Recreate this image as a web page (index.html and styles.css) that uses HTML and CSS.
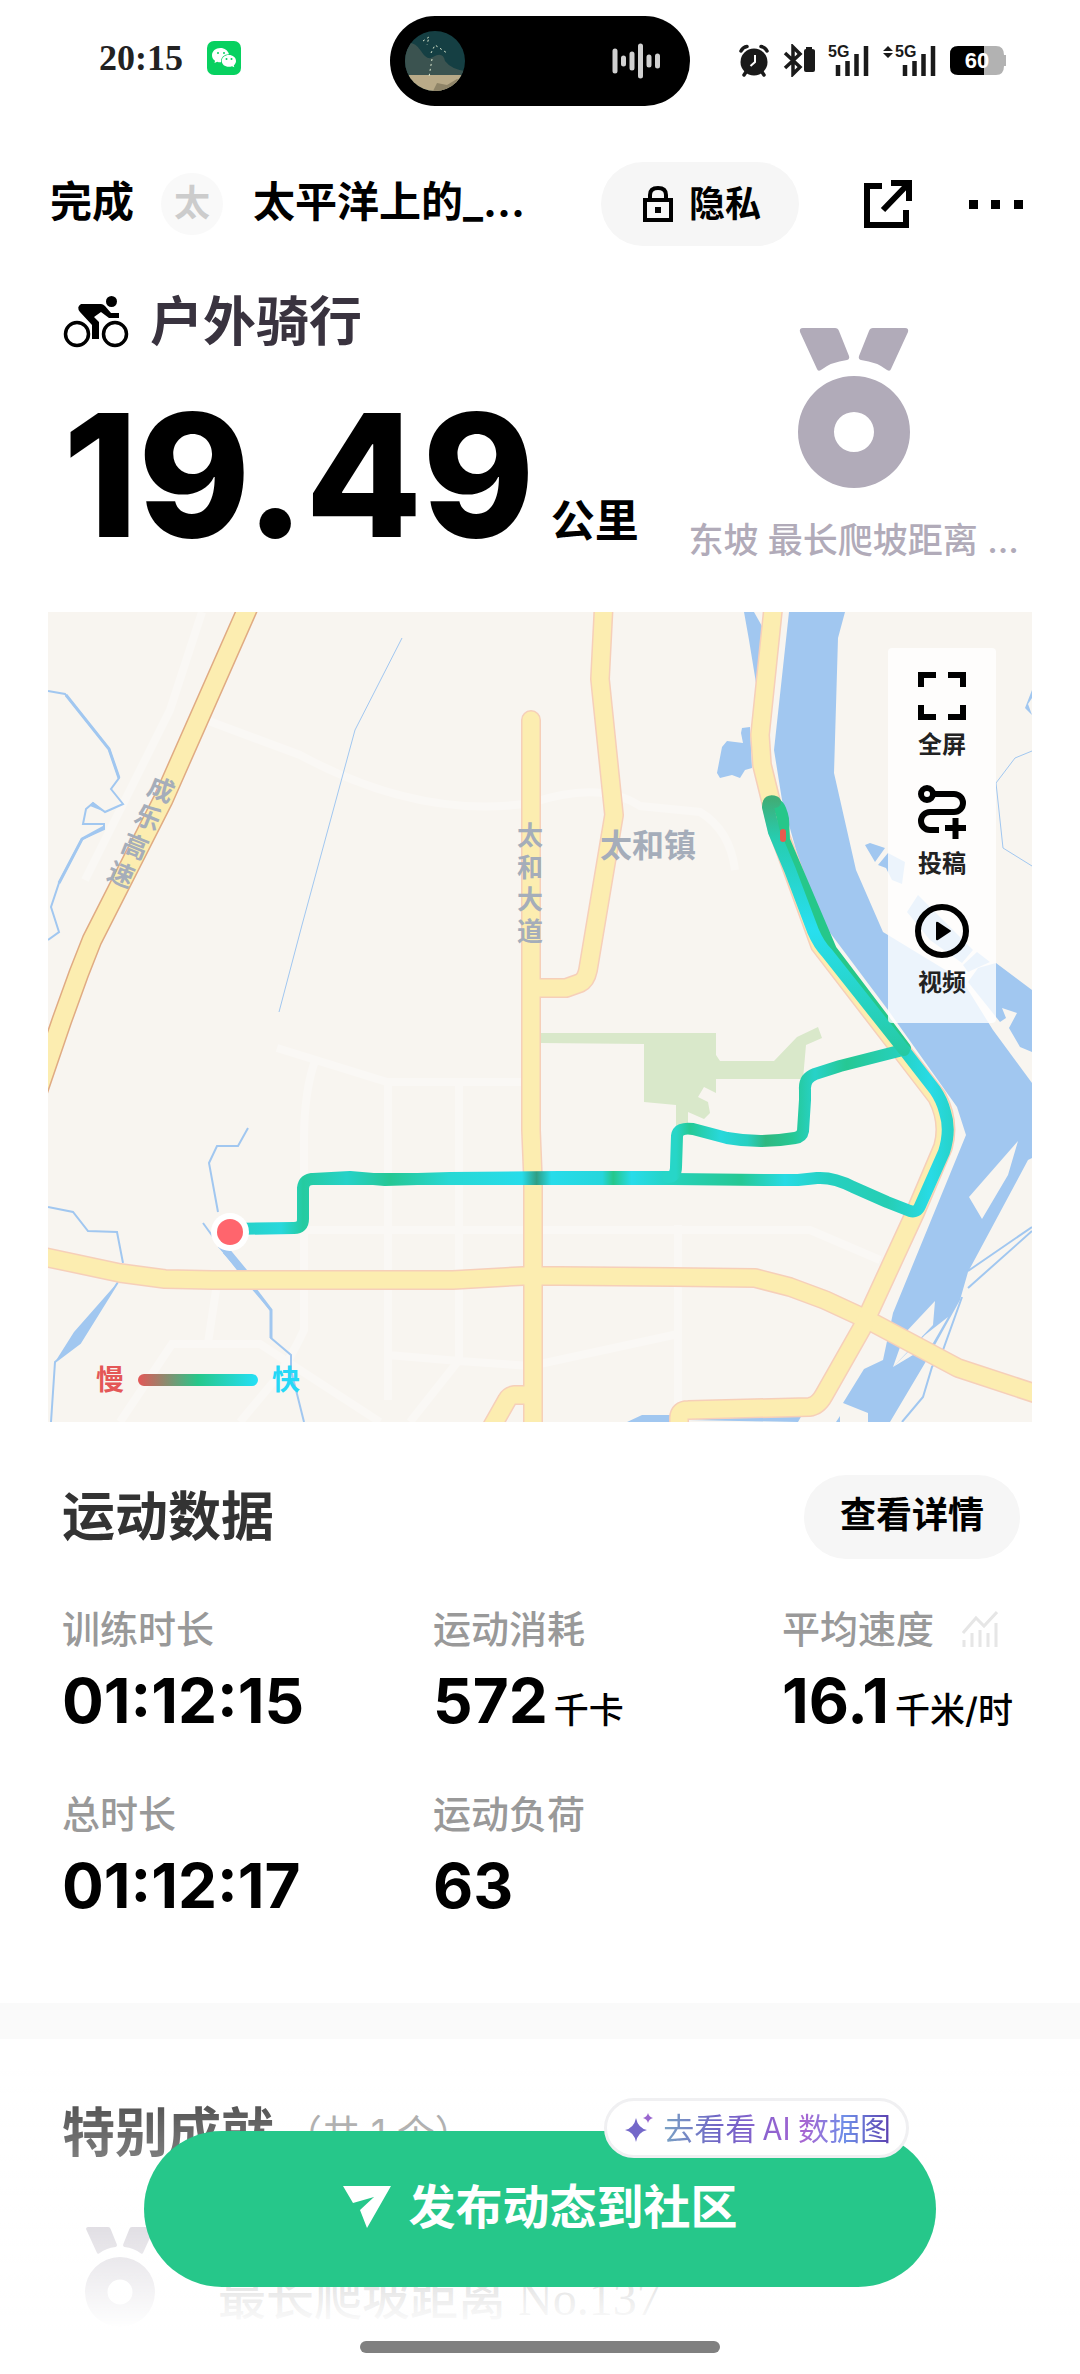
FILE: index.html
```html
<!DOCTYPE html>
<html lang="zh-CN">
<head>
    <meta charset="UTF-8">
    <meta name="viewport" content="width=device-width, initial-scale=1.0">
    <title>户外骑行</title>
    <link rel="stylesheet" href="styles.css">
</head>
<body>
    <svg width="0" height="0" class="defs" aria-hidden="true">
        <symbol id="medal" viewBox="0 0 112 160">
            <path d="M5 0H37Q40 0 41 3L51 28Q52 31 49 32Q33 34 23 42Q20 44 19 41L2 4Q1 0 5 0ZM107 0H75Q72 0 71 3L61 28Q60 31 63 32Q79 34 89 42Q92 44 93 41L110 4Q111 0 107 0Z"/>
            <path fill-rule="evenodd" d="M56 48A56 56 0 1 1 56 160A56 56 0 1 1 56 48ZM56 84A20 20 0 1 0 56 124A20 20 0 1 0 56 84Z"/>
        </symbol>
    </svg>

    <!-- Status bar -->
    <div class="status-bar">
        <div class="status-left">
            <span class="clock">20:15</span>
            <svg width="34" height="34" viewBox="0 0 34 34">
                <rect width="34" height="34" rx="7" fill="#07d160"/>
                <path fill="#fff" d="M13.500 7C8.500 7 5 10.200 5 14.200C5 16.500 6.200 18.400 8 19.700L7.500 22L10.200 20.700Q12 21.400 14 21.200A8 7 0 0 1 22 13.200C21 9.500 17.500 7 13.500 7Z"/>
                <path fill="#fff" d="M21.800 14C17.800 14 14.800 16.600 14.800 19.900S17.800 25.700 21.800 25.700Q23.500 25.700 25 25.200L27.300 26.300L26.800 24.200C28.200 23.100 29 21.600 29 19.900C29 16.600 25.800 14 21.800 14Z"/>
                <g fill="#07d160"><circle cx="11" cy="12" r="1"/><circle cx="17" cy="12" r="1"/><circle cx="19.500" cy="18" r="1"/><circle cx="24.500" cy="18" r="1"/></g>
            </svg>
        </div>
        <div class="island">
            <svg width="60" height="60" viewBox="0 0 60 60">
                <clipPath id="coverClip"><circle cx="30" cy="30" r="30"/></clipPath>
                <g clip-path="url(#coverClip)">
                    <rect width="60" height="60" fill="#153f43"/>
                    <path fill="#3b5350" d="M0 12Q10 10 16 20Q22 30 28 26Q38 20 40 30Q46 38 60 40V46H0Z"/>
                    <rect y="44" width="60" height="16" fill="#b9aa88"/>
                    <path fill="#8f8468" d="M28 60L32 52L42 54L52 48L60 52V60Z"/>
                    <path fill="none" stroke="#dce8cf" stroke-dasharray="2 3" d="M18 10L24 6L22 14M26 22L30 14L42 22M27 28L24 46"/>
                </g>
            </svg>
            <svg width="50" height="36" viewBox="0 0 50 36">
                <path stroke="#d0d0d0" stroke-width="5" stroke-linecap="round" d="M4 8V28M12.500 15V21M21 11V25M29.500 3V33M38 14V22M46.500 13V23"/>
            </svg>
        </div>
        <div class="status-right">
            <svg width="32" height="33" viewBox="0 0 32 33">
                <g stroke="#1a1a1a" stroke-width="3.500" fill="none" stroke-linecap="round">
                    <path d="M3 7Q5 3 9 2.500M29 7Q27 3 23 2.500M8 28L6 31M24 28L26 31"/>
                </g>
                <circle cx="16" cy="18" r="13.500" fill="#1a1a1a"/>
                <path d="M17 11V18L12.500 22" stroke="#fff" stroke-width="2" fill="none"/>
            </svg>
            <svg width="32" height="33" viewBox="0 0 32 33">
                <path d="M2 9L17 23L10 30V3L17 10L2 24" fill="none" stroke="#1a1a1a" stroke-width="3.500"/>
                <path d="M21 7Q21 5 23 5V3H29V5Q32 5 32 7V26Q32 28 30 28H23Q21 28 21 26Z" fill="#1a1a1a"/>
            </svg>
            <svg width="42" height="33" viewBox="0 0 42 33">
                <text x="0" y="13" class="net">5G</text>
                <path d="M10 21V32M19.500 17V32M28.500 10V32M38 2V32" stroke="#1a1a1a" stroke-width="4.500"/>
            </svg>
            <svg width="54" height="33" viewBox="0 0 54 33">
                <path d="M0 7L5 2L10 7ZM0 9H10L5 14Z" fill="#1a1a1a"/>
                <text x="12" y="13" class="net">5G</text>
                <path d="M22 21V32M31.500 17V32M40.500 10V32M50 2V32" stroke="#1a1a1a" stroke-width="4.500"/>
            </svg>
            <svg width="56" height="29" viewBox="0 0 56 29">
                <path d="M34 0H46Q54 0 54 9H56V20H54Q54 29 46 29H34Z" fill="#b2b2b2"/>
                <path d="M8 0H34V29H8Q0 29 0 21V8Q0 0 8 0Z" fill="#000"/>
                <text x="27" y="22" text-anchor="middle" class="battery-text">60</text>
            </svg>
        </div>
    </div>

    <!-- Top navigation -->
    <header class="nav">
        <button class="done">完成</button>
        <span class="avatar">太</span>
        <span class="user-name">太平洋上的_...</span>
        <button class="pill privacy">
            <svg width="30" height="36" viewBox="0 0 30 36">
                <path d="M2 14H28V34H2ZM7 14V9Q7 2 15 2T23 9V14" fill="none" stroke="#000" stroke-width="4"/>
                <rect x="12" y="21" width="6" height="6"/>
            </svg>
            隐私
        </button>
        <button class="icon-btn" aria-label="分享">
            <svg width="48" height="48" viewBox="0 0 48 48">
                <path d="M18 6H3V45H42V30M27 3H45V21M45 3L19 30" fill="none" stroke="#000" stroke-width="6"/>
            </svg>
        </button>
        <button class="icon-btn more" aria-label="更多">
            <svg width="54" height="9" viewBox="0 0 54 9">
                <path d="M0 0H9V9H0ZM22 0H31V9H22ZM45 0H54V9H45Z"/>
            </svg>
        </button>
    </header>

    <!-- Summary -->
    <section class="summary">
        <div>
            <h1 class="sport">
                <svg width="66" height="52" viewBox="0 0 66 52">
                    <g fill="none" stroke="#000" stroke-width="3.500"><circle cx="14" cy="38" r="11.500"/><circle cx="52" cy="38" r="11.500"/></g>
                    <circle cx="48.500" cy="5.500" r="5.500"/>
                    <path d="M18 8H38Q40 8 42 10L48 17H56V22H46L38 16L31 21L36 26V43H29V29L17 16Q13 11 18 8Z"/>
                </svg>
                户外骑行
            </h1>
            <p class="distance">19.49<span>公里</span></p>
        </div>
        <div class="award">
            <svg class="medal" width="112" height="160"><use href="#medal"/></svg>
            <p>东坡 最长爬坡距离 ...</p>
        </div>
    </section>

    <!-- Route map -->
    <section class="map">
        <svg class="map-canvas" viewBox="48 612 984 810">
            <defs>
                <linearGradient id="speed" gradientUnits="userSpaceOnUse" x1="230" y1="0" x2="960" y2="0">
                    <stop offset="0" stop-color="#25cfc0"/><stop offset=".07" stop-color="#28d8dc"/>
                    <stop offset=".1" stop-color="#25cba0"/><stop offset=".16" stop-color="#26d2c8"/>
                    <stop offset=".22" stop-color="#26c794"/><stop offset=".3" stop-color="#28d8d4"/>
                    <stop offset=".4" stop-color="#27dcea"/><stop offset=".42" stop-color="#2f9f84"/>
                    <stop offset=".44" stop-color="#27dcea"/><stop offset=".51" stop-color="#26d6dc"/>
                    <stop offset=".525" stop-color="#26c78a"/><stop offset=".55" stop-color="#27dcea"/>
                    <stop offset=".62" stop-color="#26d0b4"/><stop offset=".7" stop-color="#26c894"/>
                    <stop offset=".76" stop-color="#28dbe4"/><stop offset=".82" stop-color="#26d0c0"/>
                    <stop offset=".9" stop-color="#26ceb4"/><stop offset=".96" stop-color="#28dbe6"/>
                    <stop offset="1" stop-color="#26d0c0"/>
                </linearGradient>
                <linearGradient id="detour" gradientUnits="userSpaceOnUse" x1="676" y1="0" x2="900" y2="0">
                    <stop offset="0" stop-color="#27d6c8"/><stop offset=".06" stop-color="#26c994"/>
                    <stop offset=".2" stop-color="#28d8dc"/><stop offset=".32" stop-color="#27d0c0"/>
                    <stop offset=".4" stop-color="#2fb880"/><stop offset=".52" stop-color="#26c894"/>
                    <stop offset=".62" stop-color="#27d2c8"/><stop offset=".76" stop-color="#26c894"/>
                    <stop offset="1" stop-color="#26d0bc"/>
                </linearGradient>
                <linearGradient id="loop" gradientUnits="userSpaceOnUse" x1="0" y1="800" x2="0" y2="1057">
                    <stop offset="0" stop-color="#3fae78"/><stop offset=".15" stop-color="#26cdb0"/>
                    <stop offset=".5" stop-color="#28dff0"/><stop offset=".8" stop-color="#27d2c0"/>
                    <stop offset="1" stop-color="#26c9a0"/>
                </linearGradient>
                <path id="expressway" d="M250 603L163 800L92 940L79 973L62 1020L34 1102"/>
                <g id="roads">
                    <path d="M531 720V1130L533 1180V1430" stroke-linecap="round"/>
                    <path d="M40 1256L120 1273L165 1279L212 1280H453L523 1276H560L673 1277L755 1278L790 1287L825 1300L866 1319L958 1368L1040 1395"/>
                    <path d="M531 988H566L580 983Q586 980 588 970L614 815L600 679L604 600"/>
                    <path d="M774 600L760 735L762 765L778 830L820 945L897 1045L937 1097Q950 1122 943 1147L915 1213L862 1328L824 1395Q818 1406 809 1407L688 1410Q679 1410 679 1418V1430"/>
                    <path d="M533 1395H514Q509 1396 507 1400L490 1430"/>
                </g>
            </defs>
            <rect x="48" y="612" width="984" height="810" fill="#f8f5f0"/>
            <!-- parks -->
            <path fill="#d9e8ca" d="M541 1033H716V1055L720 1061H774L797 1037L818 1027L822 1038L806 1045L803 1079H716V1093L704 1087L698 1097L708 1102L710 1113L704 1119L688 1112V1128H676V1105L644 1102V1044L541 1043Z"/>
            <!-- minor streets -->
            <g fill="none" stroke="#faf8f5" stroke-width="8">
                <path d="M202 612L170 710L85 880M206 720L300 755Q420 820 531 803Q600 780 640 806L700 812Q730 830 735 870"/>
                <path d="M277 1048L387 1082H521M316 1058Q304 1090 304 1140V1330Q290 1360 275 1380L240 1422M388 1082V1400M459 1082V1360L410 1422M303 1230H810L880 1260M216 1290L208 1343M120 1422L172 1344H260L380 1422M388 1355L459 1361L531 1366L678 1334M678 1225V1405"/>
            </g>
            <!-- water -->
            <g fill="#a1c7f0">
                <path d="M789 612H845L838 638L834 773L856 870L883 932L962 980L993 1030L1032 1083V1158L1028 1160L968 1272L960 1300L925 1363L890 1422H868V1413L843 1403L864 1369L883 1360L893 1313L966 1135L957 1107L888 1010L813 910L782 800L774 750Z"/>
                <path d="M978 968L996 963L1008 972L1032 990V1052L1020 1047L1009 1028L1017 1013L1002 1008L1006 1018L1000 1022L968 982Z"/>
                <path d="M744 612H754L763 628L760 660L756 683L749 640Z"/>
                <path d="M742 728L750 727L752 768L745 770L740 778L732 775L720 778L717 773L722 747L727 741L743 743L741 733Z"/>
                <path d="M865 845L870 843L885 848L875 862ZM878 865L888 853L905 862L902 884L892 880L886 868ZM918 895L973 950L962 963L930 940L907 912ZM977 952L990 962L968 972L963 965Z"/>
                <path d="M1032 690L1025 708L1032 715L1028 704L1032 698ZM627 1422L642 1415H670V1422ZM688 1420L802 1415L798 1422ZM836 1422L840 1416V1422Z"/>
                <path d="M105 812L93 802L86 809L90 806ZM118 1282L80 1343L55 1362L74 1332ZM218 1247H228L247 1270L240 1272Z"/>
            </g>
            <g fill="#f8f5f0">
                <path d="M1018 1141L1008 1175L982 1219L969 1197ZM935 1301L905 1333L893 1367L933 1325ZM948 1317L933 1343L893 1367L925 1335Z"/>
            </g>
            <g fill="none" stroke="#a1c7f0" stroke-width="2">
                <path d="M48 691L65 694L109 749L119 778L111 789L123 804L105 812L93 803L86 809L83 824H104V829L82 839L59 883L51 907L59 932L48 940"/>
                <path d="M48 1207L73 1212L88 1231L117 1232L123 1263M118 1282L80 1343L55 1362L51 1422"/>
                <path d="M248 1128L238 1146H217L209 1163L218 1212M203 1223L224 1252L253 1289L271 1310V1338L291 1355V1370L304 1422"/>
                <path d="M962 1297L943 1350L932 1367L923 1397L902 1422M1032 1227L968 1271M1032 1231L968 1288"/>
                <path stroke-width="1" d="M402 638L355 730L302 925L279 1012M1032 751L1015 758L996 783L1003 848L1032 866"/>
            </g>
            <path d="M66 695L109 749L119 778M104 827L82 839L59 883M224 1252L245 1276L271 1310V1338" fill="none" stroke="#a1c7f0" stroke-width="3"/>
            <!-- main roads -->
            <g fill="none" stroke-linejoin="round">
                <use href="#expressway" stroke="#e0ab83" stroke-width="21"/>
                <use href="#expressway" stroke="#fcedb0" stroke-width="18"/>
                <use href="#roads" stroke="#f6cfb9" stroke-width="20"/>
                <use href="#roads" stroke="#fcedb0" stroke-width="17"/>
            </g>
            <!-- place names -->
            <g class="place">
                <text x="600" y="857" font-size="32">太和镇</text>
                <text font-size="26"><tspan x="517" y="845">太</tspan><tspan x="517" y="877">和</tspan><tspan x="517" y="909">大</tspan><tspan x="517" y="941">道</tspan></text>
                <g font-size="26" text-anchor="middle">
                    <text transform="translate(161 790) rotate(22)" y="9">成</text>
                    <text transform="translate(148 818) rotate(22)" y="9">乐</text>
                    <text transform="translate(135 847) rotate(22)" y="9">高</text>
                    <text transform="translate(121 875) rotate(22)" y="9">速</text>
                </g>
            </g>
            <!-- ride track -->
            <g fill="none" stroke-width="12" stroke-linejoin="round" stroke-linecap="round">
                <path stroke="#26c78a" d="M772 806Q779 800 783 819L784 840L831 950L905 1048"/>
                <path stroke="url(#speed)" d="M230 1229L294 1228Q303 1228 303 1219V1188Q304 1179 313 1179H560L673 1179L767 1180H798L817 1178Q834 1177 853 1187L887 1202L910 1211Q917 1213 920 1206L944 1152Q951 1130 945 1112Q942 1100 935 1090L904 1050"/>
                <path stroke="url(#speed)" d="M313 1179L350 1177L385 1180L450 1178L560 1177H668"/>
                <path stroke="url(#detour)" d="M668 1177Q676 1177 676 1167L677 1136Q678 1127 693 1129L727 1138Q760 1144 795 1138Q802 1137 803 1131L805 1100V1090Q804 1078 815 1074L840 1066L899 1051"/>
                <path stroke="url(#loop)" d="M904 1050L827 953Q819 945 813 931L790 870L774 832L768 807Q768 799 775 802"/>
                <path stroke="#e95a4e" stroke-width="6" d="M783 832V839"/>
            </g>
            <circle cx="230" cy="1232" r="19" fill="#fff"/>
            <circle cx="230" cy="1232" r="13" fill="#ff656d"/>
        </svg>

        <div class="map-tools">
            <button>
                <svg width="48" height="48" viewBox="0 0 48 48">
                    <path d="M3 15V3H18M30 3H45V15M45 33V45H30M18 45H3V33" fill="none" stroke="#000" stroke-width="6"/>
                </svg>
                全屏
            </button>
            <button>
                <svg width="48" height="54" viewBox="0 0 48 54">
                    <g fill="none" stroke="#000" stroke-width="6">
                        <circle cx="9" cy="9" r="6"/>
                        <path d="M15 9H36A9 9 0 0 1 36 27H12A9 9 0 0 0 12 45H21M27 43H48M37.500 33V54"/>
                    </g>
                </svg>
                投稿
            </button>
            <button>
                <svg width="54" height="54" viewBox="0 0 54 54">
                    <circle cx="27" cy="27" r="24" fill="none" stroke="#000" stroke-width="6"/>
                    <path d="M21 19Q21 17 23 18L35 26Q37 27 35 28L23 36Q21 37 21 35Z"/>
                </svg>
                视频
            </button>
        </div>

        <div class="legend">
            <span class="slow">慢</span>
            <i></i>
            <span class="fast">快</span>
        </div>
    </section>

    <!-- Workout data -->
    <section class="data">
        <div class="data-head">
            <h2>运动数据</h2>
            <button class="pill detail">查看详情</button>
        </div>
        <dl class="stats">
            <div>
                <dt>训练时长</dt>
                <dd>01:12:15</dd>
            </div>
            <div>
                <dt>运动消耗</dt>
                <dd>572<small>千卡</small></dd>
            </div>
            <div>
                <dt>平均速度
                    <svg width="36" height="36" viewBox="0 0 36 36">
                        <path d="M1 22L14 7L22 15L35 1M2 36V29M10 36V22M18 36V19M26 36V22M34 36V12" fill="none" stroke="#e6e6e6" stroke-width="3"/>
                    </svg>
                </dt>
                <dd>16.1<small>千米/时</small></dd>
            </div>
            <div>
                <dt>总时长</dt>
                <dd>01:12:17</dd>
            </div>
            <div>
                <dt>运动负荷</dt>
                <dd>63</dd>
            </div>
        </dl>
    </section>

    <!-- Achievements -->
    <section class="achievements">
        <h2>特别成就<span>（共 1 个）</span></h2>
        <div class="achievement">
            <svg class="medal" width="70" height="100"><use href="#medal"/></svg>
            <p>最长爬坡距离 No.137</p>
        </div>
    </section>

    <footer class="bottom-bar">
        <div class="publish-wrap">
            <button class="publish">
                <svg width="48" height="42" viewBox="0 0 48 42">
                    <path fill="#fff" d="M0 0H48L24 42L17 24L31 11L10 17Z"/>
                </svg>
                发布动态到社区
            </button>
            <a class="ai-tag" href="#">
                <svg width="28" height="30" viewBox="0 0 28 30">
                    <path fill="#7468c9" d="M11 6Q13 16 22 18Q13 20 11 30Q9 20 0 18Q9 16 11 6Z"/>
                    <path fill="#9a67cf" d="M23 1Q24 5 28 6Q24 7 23 11Q22 7 18 6Q22 5 23 1Z"/>
                </svg>
                <span>去看看 AI 数据图</span>
            </a>
        </div>
        <div class="home-indicator"></div>
    </footer>
</body>
</html>
```
FILE: styles.css
```css
* {
    box-sizing: border-box;
    margin: 0;
    padding: 0;
}

body {
    min-height: 100vh;
    background: #fff;
    color: #000;
    font-family: 'Inter', 'Noto Sans CJK SC', sans-serif;
}

button {
    border: none;
    background: none;
    color: inherit;
    font-family: inherit;
    cursor: pointer;
}

svg {
    display: block;
    flex-shrink: 0;
}

.defs {
    position: absolute;
}

/* Status bar */
.status-bar {
    display: grid;
    grid-template-columns: 1fr auto 1fr;
    align-items: center;
    padding-top: 16px;
}

.status-left {
    display: flex;
    align-items: center;
    gap: 24px;
    padding: 0 0 6px 99px;
}

.clock {
    font-family: 'Liberation Serif', serif;
    font-size: 36px;
    font-weight: bold;
    line-height: 40px;
    color: #222;
}

.island {
    display: flex;
    align-items: center;
    justify-content: space-between;
    width: 300px;
    height: 90px;
    padding: 0 29px 0 15px;
    border-radius: 45px;
    background: #000;
}

.status-right {
    display: flex;
    align-items: center;
    justify-content: flex-end;
    gap: 13px;
    padding: 0 74px 2px 0;
}

.net {
    font-family: 'Liberation Sans', sans-serif;
    font-size: 16px;
    font-weight: bold;
    fill: #1a1a1a;
}

.battery-text {
    font-family: 'Liberation Sans', sans-serif;
    font-size: 22px;
    font-weight: bold;
    fill: #fff;
}

/* Top navigation */
.nav {
    display: flex;
    align-items: center;
    margin-top: 56px;
    padding: 0 57px 0 50px;
    font-size: 42px;
    font-weight: bold;
    line-height: 48px;
}

.done {
    padding-bottom: 4px;
    font-size: 42px;
    font-weight: bold;
    line-height: 48px;
}

.avatar {
    width: 62px;
    height: 62px;
    margin: 0 30px 0 27px;
    border-radius: 50%;
    background: #f9f9f9;
    color: #ccc;
    font-size: 36px;
    line-height: 60px;
    text-align: center;
}

.user-name {
    flex: 1;
    padding-bottom: 4px;
    white-space: nowrap;
}

.pill {
    height: 84px;
    padding-bottom: 4px;
    border-radius: 42px;
    background: #f6f6f6;
    font-size: 36px;
    font-weight: bold;
    line-height: 40px;
}

.privacy {
    display: flex;
    align-items: center;
    gap: 16px;
    padding: 0 38px 0 42px;
}

.icon-btn {
    margin-left: 65px;
}

.more {
    margin-left: 57px;
}

/* Summary */
.summary {
    display: flex;
    justify-content: space-between;
    padding: 46px 61px 0 63px;
}

.sport {
    display: flex;
    align-items: center;
    gap: 21px;
    color: #39333f;
    font-size: 53px;
    line-height: 60px;
}

.distance {
    margin-top: 48px;
    font-size: 170px;
    font-weight: 800;
    line-height: 150px;
    white-space: nowrap;
}

.distance span {
    margin-left: 16px;
    font-size: 44px;
    font-weight: bold;
    line-height: 44px;
}

.award {
    display: flex;
    flex-direction: column;
    align-items: center;
    gap: 32px;
    padding-top: 36px;
    color: #b1abb9;
    font-size: 35px;
    font-weight: 500;
    line-height: 40px;
    white-space: nowrap;
}

.medal {
    fill: #b1abb9;
}

/* Map */
.map {
    position: relative;
    margin: 52px 48px 0;
}

.map-canvas {
    width: 100%;
    height: auto;
}

.place {
    fill: #a5adba;
    font-weight: bold;
}

.map-tools {
    position: absolute;
    top: 36px;
    right: 36px;
    display: flex;
    flex-direction: column;
    gap: 24px;
    width: 108px;
    padding: 24px 0;
    border-radius: 4px;
    background: rgba(255, 255, 255, 0.8);
}

.map-tools button {
    display: flex;
    flex-direction: column;
    align-items: center;
    gap: 9px;
    color: #222;
    font-size: 24px;
    font-weight: bold;
    line-height: 32px;
}

.legend {
    position: absolute;
    left: 48px;
    bottom: 24px;
    display: flex;
    align-items: center;
    gap: 14px;
    font-size: 28px;
    font-weight: bold;
    line-height: 36px;
}

.legend i {
    width: 120px;
    height: 12px;
    border-radius: 6px;
    background: linear-gradient(to right, #e45757, #26c78a 50%, #25e0f7);
}

.slow {
    color: #e45757;
}

.fast {
    color: #25d8f7;
}

/* Workout data */
.data {
    padding: 53px 60px 81px 62px;
}

.data-head {
    display: flex;
    align-items: center;
    justify-content: space-between;
}

h2 {
    color: #333;
    font-size: 53px;
    line-height: 64px;
}

.detail {
    padding: 0 36px 4px;
}

.stats {
    display: grid;
    grid-template-columns: 371fr 349fr 238fr;
    row-gap: 53px;
    margin-top: 46px;
    white-space: nowrap;
}

.stats > div {
    min-width: 0;
}

.stats dt {
    display: flex;
    align-items: center;
    gap: 28px;
    color: #999;
    font-size: 38px;
    font-weight: 500;
    line-height: 48px;
}

.stats dd {
    margin-top: 12px;
    font-size: 62px;
    font-weight: bold;
    line-height: 72px;
}

.stats small {
    margin-left: 6px;
    font-size: 35px;
    font-weight: 500;
    line-height: 36px;
}

/* Achievements */
.achievements {
    padding: 62px 62px 48px;
    border-top: 36px solid #fafafa;
}

.achievements h2 {
    display: flex;
    align-items: center;
    gap: 10px;
}

.achievements h2 span {
    color: #999;
    font-size: 38px;
    font-weight: normal;
}

.achievement {
    display: flex;
    align-items: flex-end;
    gap: 63px;
    margin-top: 62px;
    padding-left: 23px;
    color: #666;
    font-family: 'Liberation Serif', 'Noto Sans CJK SC', serif;
    font-size: 48px;
    font-weight: 500;
    line-height: 56px;
}

/* Bottom bar */
.bottom-bar {
    position: fixed;
    left: 0;
    right: 0;
    bottom: 0;
    padding: 72px 144px 21px;
    background: linear-gradient(to bottom, rgba(255, 255, 255, 0), #fff 86%);
}

.publish-wrap {
    position: relative;
}

.publish {
    display: flex;
    align-items: center;
    justify-content: center;
    gap: 18px;
    width: 100%;
    height: 156px;
    padding-bottom: 4px;
    border-radius: 78px;
    background: #26c78a;
    color: #fff;
    font-size: 47px;
    font-weight: bold;
    line-height: 52px;
}

.ai-tag {
    position: absolute;
    top: -33px;
    right: 27px;
    display: flex;
    align-items: center;
    gap: 10px;
    height: 60px;
    padding: 0 15px 2px 18px;
    border: 3px solid #f0f0f2;
    border-radius: 30px;
    background: #fff;
    font-family: 'Noto Sans CJK SC', sans-serif;
    font-size: 31px;
    line-height: 40px;
    text-decoration: none;
    white-space: nowrap;
}

.ai-tag span {
    background: linear-gradient(to right, #7aa3c4, #6f63c6 25%, #8b62cf 45%, #a766d2 62%, #6f8fe8 80%, #5b3fae);
    background-clip: text;
    -webkit-background-clip: text;
    color: transparent;
}

.home-indicator {
    width: 360px;
    height: 12px;
    margin: 54px auto 0;
    border-radius: 6px;
    background: #808080;
}
```
